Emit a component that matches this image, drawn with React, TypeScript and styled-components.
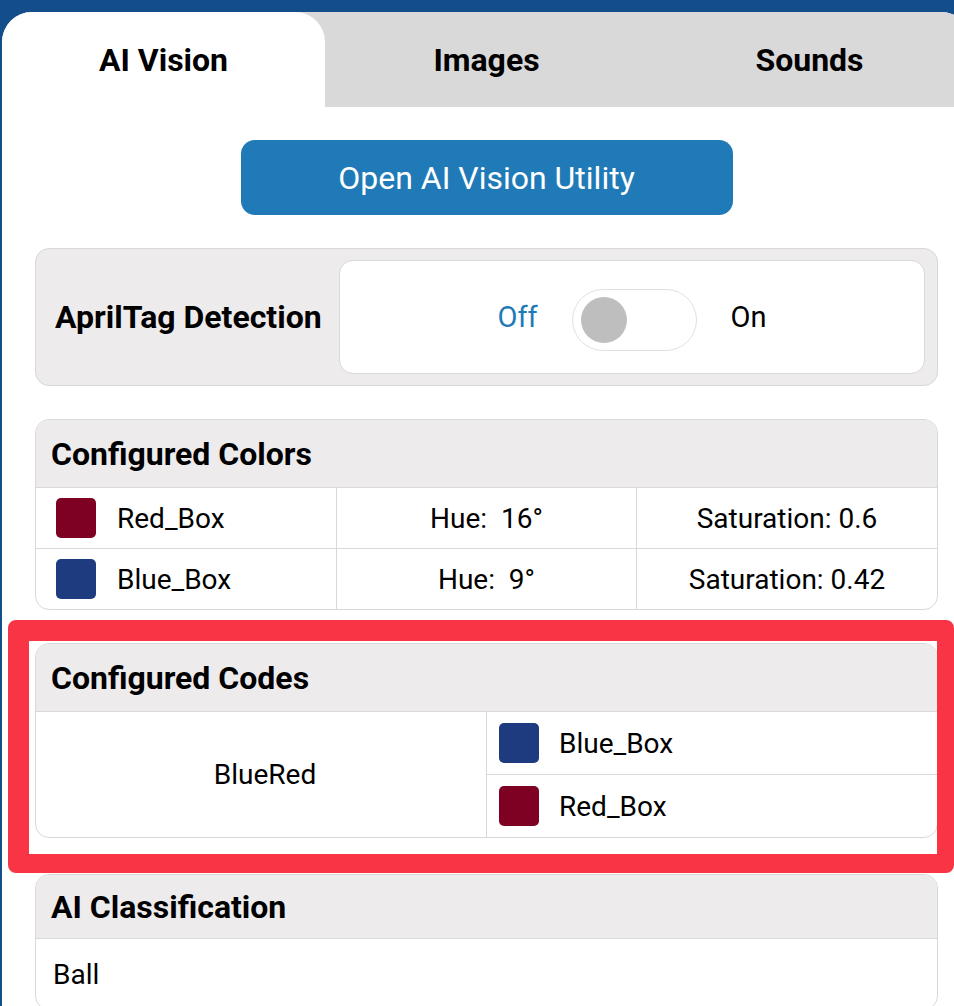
import React from 'react';
import styled, { createGlobalStyle } from 'styled-components';

const GlobalStyle = createGlobalStyle`
    html, body {
        margin: 0;
        padding: 0;
        background: #134d8a;
        overflow: hidden;
        font-family: Roboto, 'Liberation Sans', sans-serif;
        color: #000;
    }
`;

const Page = styled.div`
    padding: 12px 0 0 2px;
    height: 994px;
`;

const Panel = styled.div`
    width: 969px;
    min-height: 1000px;
    background: #fff;
    border-radius: 30px 30px 0 0;
    overflow: hidden;
`;

const TabBar = styled.div`
    display: grid;
    grid-template-columns: repeat(3, 1fr);
    height: 95px;
    background: #d9d9d9;
`;

const Tab = styled.div<{ $active?: boolean }>`
    display: flex;
    align-items: flex-start;
    justify-content: center;
    padding-top: 29px;
    font-size: 32px;
    font-weight: 700;
    background: ${(p) => (p.$active ? '#fff' : 'transparent')};
    border-radius: ${(p) => (p.$active ? '30px 30px 0 0' : '0')};
`;

const Content = styled.div`
    display: flex;
    flex-direction: column;
    gap: 33px;
    padding: 33px;
`;

const OpenButton = styled.button`
    align-self: center;
    width: 492px;
    height: 75px;
    border: none;
    border-radius: 14px;
    background: #1f7ab7;
    color: #fff;
    font-family: inherit;
    font-size: 32px;
    cursor: pointer;
`;

const Card = styled.div<{ $gap?: number }>`
    border: 1.5px solid #d8d8d8;
    border-radius: 14px;
    background: #fff;
    overflow: hidden;
    margin-top: ${(p) => p.$gap ?? 0}px;
`;

const AprilCard = styled.div`
    display: flex;
    align-items: center;
    height: 136px;
    border: 1.5px solid #d8d8d8;
    border-radius: 14px;
    background: #edebec;
`;

const AprilLabel = styled.div`
    width: 284px;
    padding-left: 19px;
    font-size: 32px;
    font-weight: 700;
`;

const ToggleBox = styled.div`
    flex: 1;
    height: 112px;
    margin-right: 12px;
    display: flex;
    align-items: center;
    justify-content: center;
    gap: 34px;
    background: #fff;
    border: 1.5px solid #d8d8d8;
    border-radius: 14px;
    font-size: 29px;
`;

const ToggleLabel = styled.span<{ $on?: boolean }>`
    color: ${(p) => (p.$on ? '#1f7ab7' : '#000')};
`;

const Switch = styled.div`
    width: 115px;
    height: 60px;
    margin-top: 6px;
    padding-left: 8px;
    border: 1.5px solid #dde1e6;
    border-radius: 32px;
    display: flex;
    align-items: center;
`;

const Knob = styled.div`
    width: 46px;
    height: 46px;
    border-radius: 50%;
    background: #bebebe;
`;

const CardHeader = styled.div<{ $h?: number }>`
    height: ${(p) => p.$h ?? 67}px;
    display: flex;
    align-items: center;
    padding-left: 15px;
    background: #edebec;
    font-size: 32px;
    font-weight: 700;
`;

const ColorRow = styled.div`
    display: grid;
    grid-template-columns: 300px 300px 1fr;
    height: 60px;
    border-top: 1.5px solid #d9d9d9;
    font-size: 28px;
`;

const Cell = styled.div<{ $center?: boolean; $pad?: number }>`
    display: flex;
    align-items: center;
    justify-content: ${(p) => (p.$center ? 'center' : 'flex-start')};
    gap: 21px;
    padding-left: ${(p) => p.$pad ?? 0}px;
    & + & {
        border-left: 1.5px solid #d9d9d9;
    }
`;

const Swatch = styled.span<{ $color: string }>`
    width: 40px;
    height: 40px;
    border-radius: 5px;
    background: ${(p) => p.$color};
    flex-shrink: 0;
`;

const CodeBody = styled.div`
    display: grid;
    grid-template-columns: 450px 1fr;
    border-top: 1.5px solid #d9d9d9;
    font-size: 28px;
`;

const CodeName = styled.div`
    display: flex;
    align-items: center;
    justify-content: center;
    padding-left: 8px;
`;

const CodeColors = styled.div`
    border-left: 1.5px solid #d9d9d9;
`;

const CodeRow = styled.div`
    display: flex;
    align-items: center;
    gap: 20px;
    height: 62px;
    padding-left: 12px;
    & + & {
        border-top: 1.5px solid #d9d9d9;
    }
`;

const Highlight = styled.div`
    position: relative;
`;

const Outline = styled.div`
    position: absolute;
    top: -23px;
    left: -27px;
    right: -16px;
    bottom: -35px;
    border-style: solid;
    border-color: #f93445;
    border-width: 21px 17px 19px 21px;
    border-radius: 8px;
    pointer-events: none;
`;

const ClassRow = styled.div`
    height: 70px;
    display: flex;
    align-items: center;
    padding-left: 17px;
    border-top: 1.5px solid #d9d9d9;
    font-size: 28px;
`;

const RED = '#7e0022';
const BLUE = '#1f3b80';

const colors = [
    { name: 'Red_Box', color: RED, hue: 16, sat: 0.6 },
    { name: 'Blue_Box', color: BLUE, hue: 9, sat: 0.42 },
];

const App = (): React.ReactElement => {
    return (
        <Page>
            <GlobalStyle />
            <Panel>
                <TabBar>
                    <Tab $active>AI Vision</Tab>
                    <Tab>Images</Tab>
                    <Tab>Sounds</Tab>
                </TabBar>
                <Content>
                    <OpenButton>Open AI Vision Utility</OpenButton>

                    <AprilCard>
                        <AprilLabel>AprilTag Detection</AprilLabel>
                        <ToggleBox>
                            <ToggleLabel $on>Off</ToggleLabel>
                            <Switch>
                                <Knob />
                            </Switch>
                            <ToggleLabel>On</ToggleLabel>
                        </ToggleBox>
                    </AprilCard>

                    <Card>
                        <CardHeader>Configured Colors</CardHeader>
                        {colors.map((c) => (
                            <ColorRow key={c.name}>
                                <Cell $pad={20}>
                                    <Swatch $color={c.color} />
                                    {c.name}
                                </Cell>
                                <Cell $center>Hue:&nbsp; {c.hue}°</Cell>
                                <Cell $center>Saturation: {c.sat}</Cell>
                            </ColorRow>
                        ))}
                    </Card>

                    <Highlight>
                        <Card>
                            <CardHeader>Configured Codes</CardHeader>
                            <CodeBody>
                                <CodeName>BlueRed</CodeName>
                                <CodeColors>
                                    <CodeRow>
                                        <Swatch $color={BLUE} />
                                        Blue_Box
                                    </CodeRow>
                                    <CodeRow>
                                        <Swatch $color={RED} />
                                        Red_Box
                                    </CodeRow>
                                </CodeColors>
                            </CodeBody>
                        </Card>
                        <Outline />
                    </Highlight>

                    <Card $gap={3}>
                        <CardHeader $h={63}>AI Classification</CardHeader>
                        <ClassRow>Ball</ClassRow>
                    </Card>
                </Content>
            </Panel>
        </Page>
    );
};

export default App;
